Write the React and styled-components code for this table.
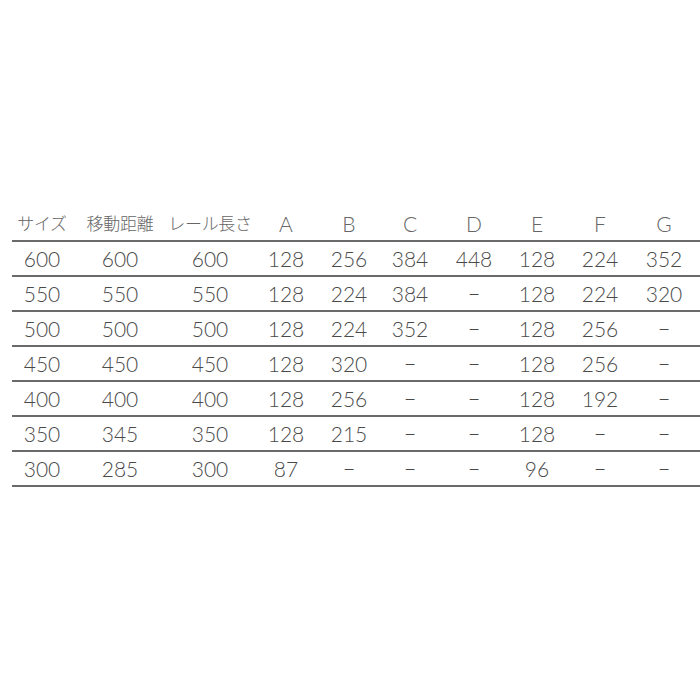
import React from 'react'
import styled, {createGlobalStyle} from 'styled-components'

const Global = createGlobalStyle`
  html, body {
    margin: 0;
    background: #ffffff;
  }
  body {
    font-family: Lato, "Noto Sans CJK JP", sans-serif;
  }
`;

const cols = '60px 96px 84px 68px 58px 64px 64px 62px 64px 64px';

const Page = styled.div`
  width: 700px;
  height: 700px;
  padding-top: 207px;
  padding-left: 12px;
  box-sizing: border-box;
`;

const Table = styled.div`
  width: 688px;
  display: flex;
  flex-direction: column;
`;

const Row = styled.div`
  display: grid;
  grid-template-columns: ${cols};
  height: 33px;
  border-bottom: 2px solid #6a6a6a;
  align-items: center;
`;

const Cell = styled.div`
  text-align: center;
  white-space: nowrap;
  color: ${props => props.head ? '#666666' : '#4a4a4a'};
  font-family: Lato, "Noto Sans CJK JP", sans-serif;
  font-weight: 300;
  font-size: ${props => props.jp ? '17px' : '21px'};
  letter-spacing: ${props => props.jp ? '-0.3px' : '0'};
  line-height: 1;
`;

const headers = ['サイズ', '移動距離', 'レール長さ', 'A', 'B', 'C', 'D', 'E', 'F', 'G'];

const d = '−';

const rows = [
    ['600', '600', '600', '128', '256', '384', '448', '128', '224', '352'],
    ['550', '550', '550', '128', '224', '384', d, '128', '224', '320'],
    ['500', '500', '500', '128', '224', '352', d, '128', '256', d],
    ['450', '450', '450', '128', '320', d, d, '128', '256', d],
    ['400', '400', '400', '128', '256', d, d, '128', '192', d],
    ['350', '345', '350', '128', '215', d, d, '128', d, d],
    ['300', '285', '300', '87', d, d, d, '96', d, d],
];

const App = () => {
    return (
        <Page>
            <Global/>
            <Table>
                <Row>
                    {headers.map((h, i) => (
                        <Cell head jp={i < 3} key={h}>{h}</Cell>
                    ))}
                </Row>
                {rows.map((r, i) => (
                    <Row key={i}>
                        {r.map((v, j) => <Cell key={j}>{v}</Cell>)}
                    </Row>
                ))}
            </Table>
        </Page>
    )
}

export default App
